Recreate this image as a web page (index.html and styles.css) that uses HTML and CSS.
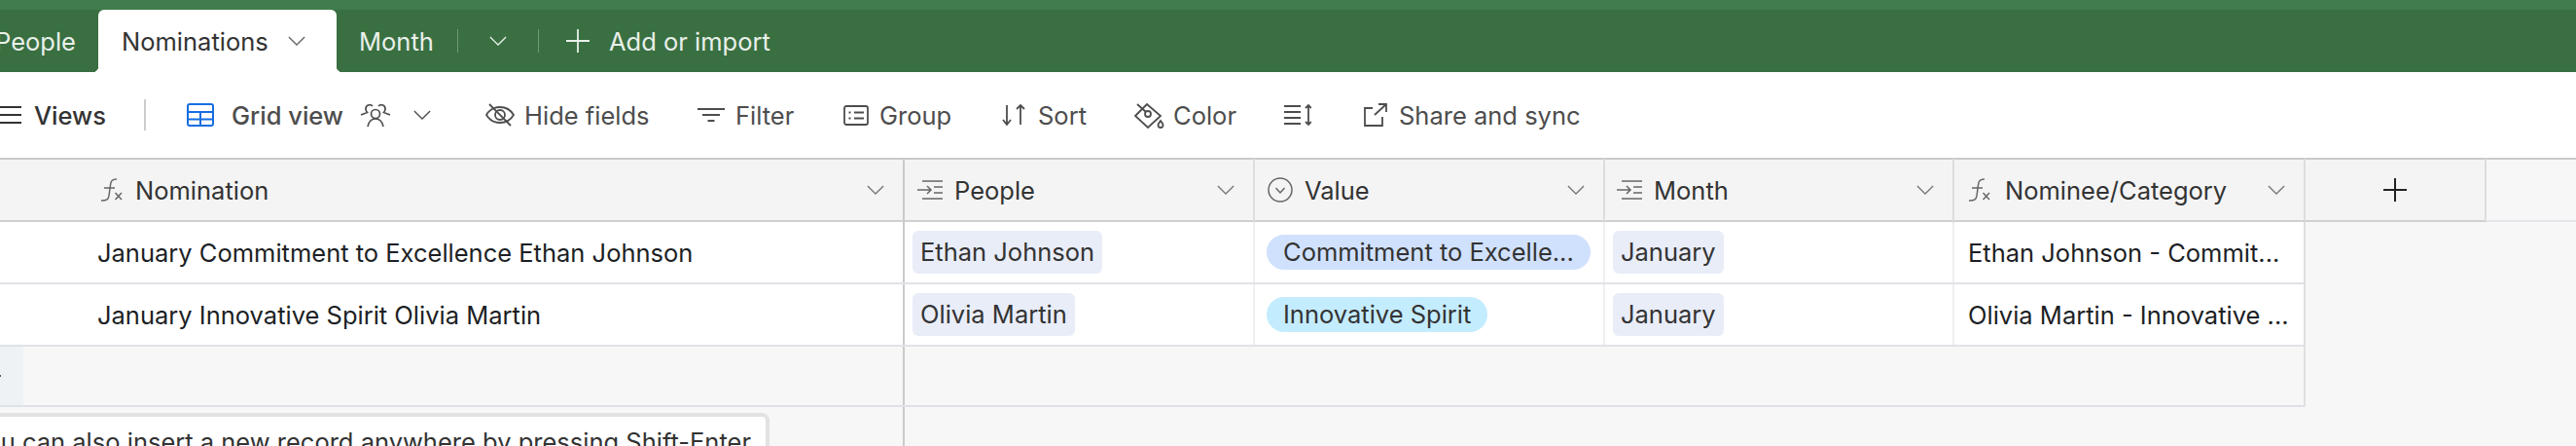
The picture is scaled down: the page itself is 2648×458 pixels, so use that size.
FILE: index.html
```html
<!DOCTYPE html>
<html>
<head>
	<meta charset="utf-8">
	<title>Nominations</title>
	<link rel="stylesheet" href="styles.css">
</head>
<body>
	<div class="tabbar">
		<div class="tab tab-people">People</div>
		<div class="tab tab-active">Nominations
			<svg class="chev" viewBox="0 0 20 12"><path d="M1 1l9 9 9-9"/></svg>
		</div>
		<div class="tab tab-month">Month</div>
		<div class="tab-sep"></div>
		<svg class="chev chev-tab" viewBox="0 0 20 12"><path d="M1 1l9 9 9-9"/></svg>
		<div class="tab-sep"></div>
		<svg class="plus-tab" viewBox="0 0 24 24"><path d="M12 0v24M0 12h24"/></svg>
		<div class="tab tab-add">Add or import</div>
	</div>

	<div class="toolbar">
		<svg class="ico-menu" viewBox="0 0 22 20"><path d="M0 2h22M0 10h22M0 18h22"/></svg>
		<span class="views">Views</span>
		<div class="tool-sep"></div>
		<svg class="ico-grid" viewBox="0 0 28 24"><rect x="1" y="1" width="26" height="22" rx="2"/><path d="M1 9h26M1 16.500h26M14 9v14"/></svg>
		<span class="gridview">Grid view</span>
		<svg class="ico-people" viewBox="0 0 32 26"><circle cx="16" cy="12" r="4.500"/><path d="M8 25c1-5 4-8 8-8s7 3 8 8M13 4a4 4 0 0 0-7 3c0 1.500 1 3 1.500 3.500L1 13M19 4a4 4 0 0 1 7 3c0 1.500-1 3-1.500 3.500L31 13"/></svg>
		<svg class="chev chev-tool" viewBox="0 0 20 12"><path d="M1 1l9 9 9-9"/></svg>
		<div class="tool tool-hide"><svg class="ico-hide" viewBox="0 0 30 24"><path d="M1 12c3-5 8-8 14-8s11 3 14 8c-3 5-8 8-14 8s-11-3-14-8z"/><circle cx="15" cy="12" r="5"/><path d="M4 1l22 22"/></svg>Hide fields</div>
		<div class="tool tool-filter"><svg class="ico-filter" viewBox="0 0 28 16"><path d="M0 2h28M5 8h18M10.500 14h7"/></svg>Filter</div>
		<div class="tool tool-group"><svg class="ico-group" viewBox="0 0 26 21"><rect x="1" y="1" width="24" height="19" rx="2"/><path d="M5.500 7.500h2M11 7.500h10M5.500 13.500h2M11 13.500h10"/></svg>Group</div>
		<div class="tool tool-sort"><svg class="ico-sort" viewBox="0 0 24 22"><path d="M5 1v20M1 16l4 5 4-5M19 21V1M15 5l4-4 4 4"/></svg>Sort</div>
		<div class="tool tool-color"><svg class="ico-color" viewBox="0 0 31 28"><path d="M1 15L13 3l14 12-13 12z"/><circle cx="14" cy="13" r="3"/><path d="M3 3l9 8M27 20c-1.500 2-2.500 3-2.500 4.500a2.500 2.500 0 0 0 5 0c0-1.500-1-2.500-2.500-4.500z"/></svg>Color</div>
		<div class="tool tool-height"><svg class="ico-height" viewBox="0 0 28 22"><path d="M0 2h17M0 8h17M0 14h17M0 20h17M25 1v20M22 4l3-3 3 3M22 18l3 3 3-3"/></svg></div>
		<div class="tool tool-share"><svg class="ico-share" viewBox="0 0 24 24"><path d="M9 5H1v18h18v-9M11 12L23 1M15 1h8v8"/></svg>Share and sync</div>
	</div>

	<div class="grid">
		<div class="row row-head">
			<div class="cell cell-main">
				<svg class="ico-fx" viewBox="0 0 24 24"><path d="M17 1c-5 0-6 2-6.500 6L9 18c-.5 3.500-2 5-8 5M4 10h11M15.500 15l6.500 7M22 15l-6.500 7"/></svg><span class="head-label">Nomination</span>
				<svg class="chev chev-head" viewBox="0 0 20 12"><path d="M1 1l9 9 9-9"/></svg>
			</div>
			<div class="cell cell-people">
				<svg class="ico-link" viewBox="0 0 26 20"><path d="M5 1h21M0 10h14M10 6l4 4-4 4M17 7h9M17 13h9M5 19h21"/></svg><span class="head-label">People</span>
				<svg class="chev chev-head" viewBox="0 0 20 12"><path d="M1 1l9 9 9-9"/></svg>
			</div>
			<div class="cell cell-value">
				<svg class="ico-select" viewBox="0 0 26 26"><circle cx="13" cy="13" r="12"/><path d="M8.500 11l4.500 5 4.500-5"/></svg><span class="head-label">Value</span>
				<svg class="chev chev-head" viewBox="0 0 20 12"><path d="M1 1l9 9 9-9"/></svg>
			</div>
			<div class="cell cell-month">
				<svg class="ico-link" viewBox="0 0 26 20"><path d="M5 1h21M0 10h14M10 6l4 4-4 4M17 7h9M17 13h9M5 19h21"/></svg><span class="head-label">Month</span>
				<svg class="chev chev-head" viewBox="0 0 20 12"><path d="M1 1l9 9 9-9"/></svg>
			</div>
			<div class="cell cell-cat">
				<svg class="ico-fx" viewBox="0 0 24 24"><path d="M17 1c-5 0-6 2-6.500 6L9 18c-.5 3.500-2 5-8 5M4 10h11M15.500 15l6.500 7M22 15l-6.500 7"/></svg><span class="head-label">Nominee/Category</span>
				<svg class="chev chev-head" viewBox="0 0 20 12"><path d="M1 1l9 9 9-9"/></svg>
			</div>
			<div class="cell cell-add">
				<svg class="plus-head" viewBox="0 0 24 24"><path d="M12 0v24M0 12h24"/></svg>
			</div>
			<div class="head-rest"></div>
		</div>

		<div class="row row-data">
			<div class="cell cell-main"><span class="cell-text">January Commitment to Excellence Ethan Johnson</span></div>
			<div class="cell cell-people"><span class="chip">Ethan Johnson</span></div>
			<div class="cell cell-value"><span class="pill pill-blue">Commitment to Excelle...</span></div>
			<div class="cell cell-month"><span class="chip">January</span></div>
			<div class="cell cell-cat"><span class="cell-text">Ethan Johnson - Commit...</span></div>
		</div>
		<div class="row row-data">
			<div class="cell cell-main"><span class="cell-text">January Innovative Spirit Olivia Martin</span></div>
			<div class="cell cell-people"><span class="chip">Olivia Martin</span></div>
			<div class="cell cell-value"><span class="pill pill-cyan">Innovative Spirit</span></div>
			<div class="cell cell-month"><span class="chip">January</span></div>
			<div class="cell cell-cat"><span class="cell-text">Olivia Martin - Innovative ...</span></div>
		</div>
		<div class="row row-new">
			<div class="new-left">
				<div class="new-btn"><svg class="plus-new" viewBox="0 0 24 24"><path d="M12 0v24M0 12h24"/></svg></div>
			</div>
		</div>
		<div class="row-foot"></div>
		<div class="hint">You can also insert a new record anywhere by pressing Shift-Enter</div>
	</div>
</body>
</html>
```

FILE: styles.css
```css
* {
	margin: 0;
	padding: 0;
	box-sizing: border-box;
}

html, body {
	height: 458px;
	overflow: hidden;
}

body {
	width: 2648px;
	background: #fff;
	font-family: Inter, sans-serif;
	font-size: 25.5px;
	color: #333;
}

svg {
	fill: none;
	stroke: currentColor;
	flex: none;
}

/* tabs */
.tabbar {
	height: 74px;
	background: #396f41;
	border-top: 10px solid #417c4c;
	display: flex;
	align-items: center;
	color: #e9f0ea;
}

.tab {
	white-space: nowrap;
}

.tab-people {
	margin-left: -5px;
	width: 106px;
}

.tab-active {
	position: relative;
	width: 245px;
	height: 64px;
	padding-left: 24px;
	background: #fff;
	border-radius: 6px 6px 0 0;
	color: #333;
	display: flex;
	align-items: center;
}

.tab-active::before,
.tab-active::after {
	content: "";
	position: absolute;
	bottom: 0;
	width: 6px;
	height: 6px;
}

.tab-active::before {
	left: -6px;
	background: radial-gradient(circle at 0 0, transparent 6px, #fff 6.500px);
}

.tab-active::after {
	right: -6px;
	background: radial-gradient(circle at 100% 0, transparent 6px, #fff 6.500px);
}

.tab-active .chev {
	margin-left: auto;
	margin-right: 32px;
	color: #666;
}

.tab-month {
	margin-left: 23px;
	width: 101px;
}

.tab-sep {
	width: 1px;
	height: 24px;
	background: #6f9a76;
}

.chev {
	width: 18px;
	height: 11px;
	stroke-width: 1.500;
}

.chev-tab {
	margin: 0 32px;
}

.plus-tab {
	width: 24px;
	height: 24px;
	stroke-width: 1.800;
	margin-left: 28px;
	margin-right: 20px;
}

/* toolbar */
.toolbar {
	height: 88px;
	display: flex;
	align-items: center;
	color: #4d4d4d;
}

.ico-menu {
	width: 22px;
	height: 20px;
	stroke-width: 2;
	color: #333;
}

.views {
	margin-left: 13px;
	width: 113px;
	color: #333;
	font-weight: 500;
}

.tool-sep {
	width: 2px;
	height: 32px;
	background: #ccc;
}

.ico-grid {
	width: 28px;
	height: 24px;
	margin-left: 42px;
	color: #166ee1;
	stroke-width: 2;
}

.gridview {
	margin-left: 18px;
	width: 132px;
	font-weight: 500;
}

.ico-people {
	width: 32px;
	height: 26px;
	stroke-width: 1.700;
}

.chev-tool {
	margin-left: 23px;
}

.tool {
	display: flex;
	align-items: center;
	white-space: nowrap;
}

.tool svg {
	stroke-width: 1.800;
}

.tool-hide { margin-left: 56px; width: 218px; }
.tool-filter { width: 150px; }
.tool-group { width: 163px; }
.tool-sort { width: 136px; }
.tool-color { width: 154px; }
.tool-height { width: 82px; }

.ico-hide { width: 30px; height: 24px; margin-right: 10px; }
.ico-filter { width: 28px; height: 16px; margin-right: 11px; }
.ico-group { width: 26px; height: 21px; margin-right: 11px; }
.ico-sort { width: 24px; height: 22px; margin-right: 13px; }
.ico-color { width: 31px; height: 28px; margin-right: 9px; }
.ico-height { width: 28px; height: 22px; }
.ico-share { width: 24px; height: 24px; margin-right: 12px; }

/* grid */
.grid {
	position: relative;
	background: #f7f7f7;
	height: 296px;
	overflow: hidden;
}

.row {
	display: flex;
}

.row-head {
	height: 66px;
}

.row-data {
	height: 64px;
	width: 2370px;
	background: #fff;
	border-bottom: 2px solid #dfe2e6;
}

.cell {
	display: flex;
	align-items: center;
	border-right: 2px solid #efefef;
	white-space: nowrap;
	flex: none;
}

.row-head .cell {
	background: #f4f4f4;
	color: #333;
	border-top: 2px solid #cacaca;
	border-bottom: 2px solid #d0d0d0;
	border-right-color: #dcdde0;
}

.row-head .head-rest {
	flex: 1;
	border-top: 2px solid #cacaca;
	border-bottom: 2px solid #e2e6ea;
}

.cell-main {
	width: 930px;
	padding-left: 100px;
	border-right: 2px solid #cacaca !important;
}

.cell-people { width: 360px; padding-left: 8px; }
.cell-value { width: 360px; padding-left: 12px; }
.cell-month { width: 359px; padding-left: 8px; }
.cell-cat { width: 361px; padding-left: 14px; border-right-color: #dfdfdf; }

.row-head .cell-main { padding-left: 103px; }
.row-head .cell-people,
.row-head .cell-value { padding-left: 13px; }
.row-head .cell-month { padding-left: 12px; }

.cell-add {
	width: 186px;
	justify-content: center;
}

.plus-head {
	width: 24px;
	height: 24px;
	stroke-width: 2;
	color: #222;
}

.ico-fx {
	width: 24px;
	height: 24px;
	stroke-width: 1.500;
	color: #666;
}

.ico-link {
	width: 26px;
	height: 20px;
	stroke-width: 1.500;
	color: #666;
}

.ico-select {
	width: 26px;
	height: 26px;
	stroke-width: 1.500;
	color: #666;
}

.head-label {
	margin-left: 12px;
}

.cell-cat .head-label {
	margin-left: 14px;
}

.chev-head {
	margin-left: auto;
	margin-right: 19px;
	color: #777;
}

.cell-text {
	color: #1d1f25;
}

.chip {
	background: #e9edf8;
	border-radius: 6px;
	height: 44px;
	line-height: 44px;
	padding: 0 8px;
}

.pill {
	border-radius: 18px;
	height: 36px;
	line-height: 36px;
	padding: 0 17px;
}

.pill-blue { background: #d0e1fd; }
.pill-cyan { background: #c4ecff; }

.row-new {
	height: 62px;
	width: 2370px;
	border-bottom: 2px solid #dfe2e6;
	border-right: 2px solid #dfdfdf;
}

.new-left {
	width: 930px;
	border-right: 2px solid #cacaca;
}

.new-btn {
	width: 24px;
	height: 60px;
	background: #eef2f5;
	display: flex;
	align-items: center;
	overflow: hidden;
}

.plus-new {
	width: 24px;
	height: 24px;
	margin-left: -23px;
	stroke-width: 2;
	color: #555;
}

.row-foot {
	width: 930px;
	height: 41px;
	border-right: 2px solid #cacaca;
}

.hint {
	position: absolute;
	left: -60px;
	top: 262px;
	width: 851px;
	height: 60px;
	padding: 10px 15px 0 0;
	background: #fff;
	border: 4px solid #e2e2e2;
	border-radius: 8px;
	color: #333;
	text-align: right;
	white-space: nowrap;
}
```
